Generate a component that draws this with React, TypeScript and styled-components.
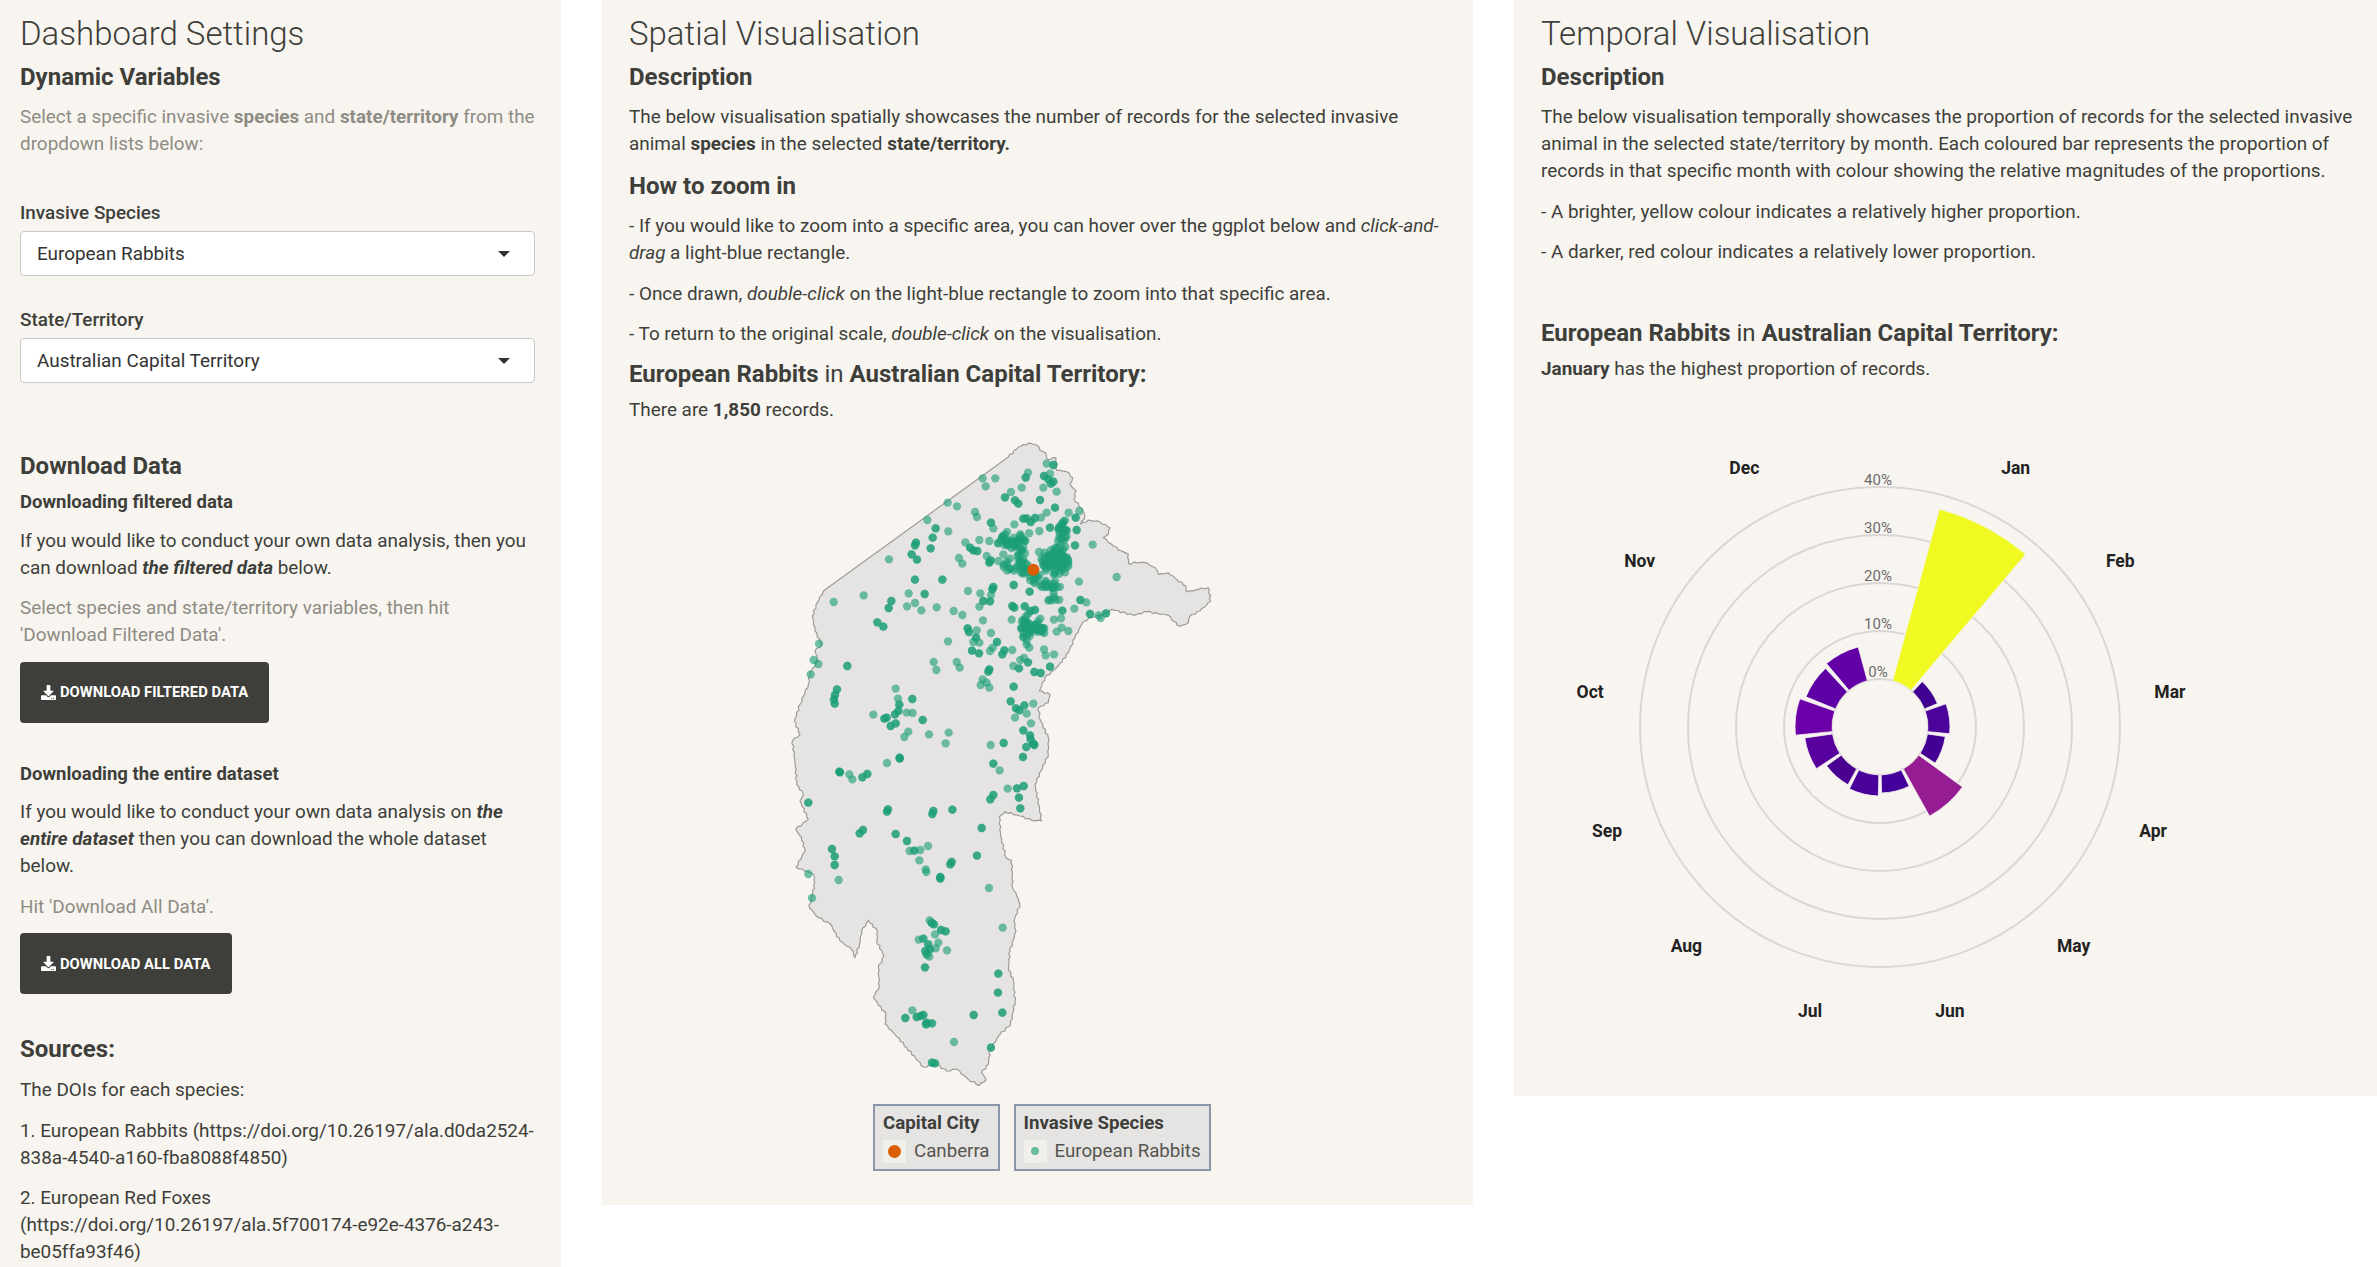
import React from 'react';
import styled, { createGlobalStyle } from 'styled-components';
import { FaDownload } from 'react-icons/fa';

const GlobalStyle = createGlobalStyle`
  html, body {
    margin: 0;
    height: 100%;
    overflow: hidden;
    background: #fff;
  }
  body {
    font-family: Roboto, "Liberation Sans", sans-serif;
    font-size: 18.9px;
    line-height: 27px;
    color: #3e3f3a;
  }
`;

type Pt = [number, number];

// outline of the territory, in 3x units of the map box
const OUTLINE: Pt[] = [
  [775, 78], [805, 67], [830, 72], [840, 88], [858, 97], [862, 115], [888, 110], [890, 148], [920, 152], [938, 170],
  [930, 190], [948, 210], [942, 235], [965, 262], [975, 285], [962, 310], [985, 297], [1020, 303], [1050, 320], [1045, 340],
  [1030, 350], [1060, 375], [1085, 390], [1105, 400], [1105, 428], [1130, 425], [1155, 425], [1185, 440], [1195, 460], [1225, 455],
  [1250, 475], [1278, 495], [1280, 513], [1315, 505], [1345, 500], [1352, 540], [1320, 570], [1290, 585], [1285, 605], [1260, 616],
  [1240, 600], [1225, 583], [1160, 572], [1120, 583], [1055, 565], [1030, 580], [985, 592], [965, 610], [945, 650], [925, 695],
  [895, 735], [855, 770], [838, 810], [870, 820], [865, 845], [835, 860], [840, 895], [865, 950], [865, 1000], [825, 1090],
  [845, 1200], [815, 1198], [780, 1185], [735, 1172], [718, 1188], [722, 1245], [738, 1310], [755, 1318], [758, 1400], [770, 1425],
  [780, 1450], [762, 1500], [768, 1530], [750, 1590], [745, 1640], [760, 1680], [765, 1740], [752, 1810], [720, 1840], [690, 1885],
  [685, 1930], [665, 1955], [678, 1975], [658, 1993], [625, 1975], [590, 1945], [560, 1950], [530, 1930], [490, 1938], [440, 1880],
  [405, 1840], [375, 1810], [378, 1780], [340, 1730], [358, 1695], [355, 1640], [372, 1605], [350, 1560], [352, 1530], [325, 1498],
  [305, 1530], [298, 1570], [285, 1610], [275, 1585], [240, 1560], [210, 1508], [175, 1490], [148, 1460], [165, 1385], [160, 1360],
  [108, 1338], [135, 1290], [125, 1250], [107, 1225], [145, 1195], [120, 1140], [130, 1120], [110, 1090], [105, 1020], [97, 960],
  [120, 940], [103, 900], [120, 850], [145, 790], [150, 755], [175, 720], [165, 690], [185, 670], [165, 630], [157, 585],
  [172, 545], [190, 510], [745, 108],
];

// small wiggle along the border so it reads as a natural boundary
function roughen(points: Pt[]): string {
  const out: string[] = [];
  points.forEach((p, i) => {
    const q = points[(i + 1) % points.length];
    const dx = q[0] - p[0];
    const dy = q[1] - p[1];
    const len = Math.hypot(dx, dy);
    const steps = len > 300 ? 1 : Math.max(1, Math.round(len / 9));
    for (let s = 0; s < steps; s++) {
      const t = s / steps;
      const n = s === 0 ? 0 : Math.sin(i * 7.3 + s * 2.7) * 2.6;
      out.push(`${(p[0] + dx * t - (dy / len) * n).toFixed(1)},${(p[1] + dy * t + (dx / len) * n).toFixed(1)}`);
    }
  });
  return out.join(' ');
}

const LIGHT: Pt[] = [
  [860, 128], [668, 172], [706, 172], [677, 196], [804, 155], [870, 158], [850, 200], [890, 212], [785, 200], [753, 213],
  [563, 245], [591, 256], [645, 273], [651, 288], [502, 297], [565, 331], [763, 310], [926, 275], [958, 270], [860, 275],
  [843, 290], [700, 322], [838, 330], [616, 364], [658, 357], [688, 360], [998, 371], [387, 415], [597, 411], [607, 428],
  [680, 405], [837, 393], [730, 400], [715, 420], [957, 482], [1070, 468], [311, 523], [221, 543], [446, 517], [441, 556],
  [465, 546], [484, 568], [530, 559], [581, 570], [607, 582], [624, 510], [661, 517], [693, 522], [658, 557], [943, 563],
  [979, 544], [1016, 583], [1022, 591], [755, 596], [669, 598], [882, 596], [903, 592], [905, 620], [925, 630], [890, 632],
  [693, 636], [650, 628], [640, 663], [658, 665], [564, 661], [177, 668], [161, 717], [175, 729], [152, 760], [690, 690],
  [698, 680], [757, 687], [800, 670], [808, 680], [852, 685], [857, 703], [882, 700], [521, 723], [590, 723], [529, 747],
  [599, 740], [781, 717], [792, 711], [760, 735], [668, 775], [662, 792], [680, 785], [688, 800], [407, 803], [414, 833],
  [340, 881], [440, 875], [458, 876], [820, 848], [765, 890], [800, 878], [813, 907], [445, 932], [507, 940], [566, 935],
  [433, 948], [557, 967], [692, 972], [381, 1026], [268, 1060], [277, 1075], [719, 1048], [743, 1103], [449, 1290], [481, 1287],
  [504, 1275], [478, 1318], [497, 1345], [499, 1353], [145, 1359], [236, 1377], [156, 1431], [687, 1401], [728, 1520], [509, 1498],
  [525, 1540], [476, 1556], [535, 1565], [527, 1582], [561, 1588], [508, 1607], [457, 1768], [582, 1863],
];

const DARK: Pt[] = [
  [880, 132], [797, 170], [852, 165], [865, 175], [880, 182], [873, 188], [735, 229], [765, 238], [775, 248], [840, 237],
  [885, 260], [693, 305], [800, 292], [790, 293], [825, 291], [812, 303], [527, 322], [518, 350], [468, 365], [465, 373],
  [512, 382], [455, 400], [471, 416], [630, 380], [640, 388], [652, 390], [692, 418], [688, 425], [870, 320], [947, 290],
  [950, 327], [945, 373], [465, 476], [547, 476], [494, 519], [394, 540], [386, 561], [700, 498], [697, 505], [761, 492],
  [809, 512], [670, 540], [690, 541], [757, 555], [763, 560], [794, 556], [825, 567], [812, 570], [907, 569], [961, 537],
  [990, 579], [1038, 577], [352, 604], [370, 617], [623, 622], [627, 633], [648, 650], [711, 663], [636, 689], [657, 697],
  [733, 688], [727, 700], [262, 735], [804, 724], [777, 742], [688, 745], [685, 752], [823, 753], [842, 756], [870, 737],
  [761, 797], [231, 805], [225, 822], [222, 835], [224, 848], [457, 834], [418, 851], [415, 870], [405, 880], [380, 890],
  [373, 893], [407, 907], [392, 915], [488, 897], [752, 841], [768, 862], [778, 868], [793, 853], [790, 928], [810, 943],
  [812, 955], [731, 966], [799, 978], [820, 968], [823, 972], [789, 1008], [700, 1028], [419, 1010], [419, 1013], [238, 1052],
  [240, 1054], [307, 1069], [322, 1059], [145, 1145], [771, 1102], [791, 1095], [777, 1130], [700, 1122], [691, 1135], [781, 1162],
  [384, 1165], [381, 1172], [520, 1170], [517, 1179], [577, 1166], [665, 1221], [309, 1227], [299, 1237], [407, 1239], [441, 1260],
  [216, 1284], [224, 1306], [224, 1332], [463, 1289], [651, 1304], [575, 1323], [571, 1330], [541, 1368], [541, 1373], [515, 1506],
  [522, 1510], [543, 1527], [557, 1531], [490, 1553], [505, 1570], [496, 1590], [510, 1585], [500, 1600], [495, 1639], [715, 1658],
  [714, 1715], [727, 1775], [641, 1782], [436, 1791], [470, 1788], [490, 1782], [482, 1785], [500, 1805], [498, 1810], [516, 1807],
  [693, 1880], [516, 1925], [525, 1927],
];

// runs of records packed so tightly they merge into thick bands
const BANDS: Pt[][] = [
  [[715, 355], [740, 360], [770, 368], [785, 400], [790, 430], [800, 455], [825, 470], [850, 490], [880, 500], [895, 485]],
  [[868, 525], [878, 530], [892, 540]],
  [[905, 305], [910, 340], [900, 370]],
  [[898, 310], [918, 325]],
  [[905, 385], [915, 410], [915, 440], [895, 450], [860, 440], [855, 410], [880, 390], [900, 395]],
  [[870, 400], [895, 425], [870, 430], [890, 405]],
  [[730, 340], [745, 375], [775, 355], [805, 345]],
  [[785, 610], [820, 620], [855, 628]],
  [[795, 585], [800, 625], [800, 660]],
  [[830, 600], [845, 640]],
  [[740, 420], [742, 450]],
  [[770, 430], [775, 450]],
];

function trail(points: Pt[]): Pt[] {
  const out: Pt[] = [];
  for (let i = 0; i < points.length - 1; i++) {
    const [a, b] = [points[i], points[i + 1]];
    const n = Math.max(1, Math.round(Math.hypot(b[0] - a[0], b[1] - a[1]) / 4));
    for (let s = 0; s < n; s++) {
      // scatter across the band so it comes out as wide as the original clusters
      const jx = Math.sin(s * 2.1 + i) * 11;
      const jy = Math.cos(s * 3.3 + i) * 11;
      out.push([a[0] + ((b[0] - a[0]) * s) / n + jx, a[1] + ((b[1] - a[1]) * s) / n + jy]);
    }
  }
  return out;
}

const RECORDS: Pt[] = [...LIGHT, ...DARK, ...DARK, ...BANDS.flatMap(trail)];

const STEP = 360 / 13;
const MONTHS = [
  { name: 'Jan', r: 226, fill: '#f0f921' },
  { name: 'Feb', r: 62, fill: '#3f0090' },
  { name: 'Mar', r: 70, fill: '#4b039a' },
  { name: 'Apr', r: 66, fill: '#430092' },
  { name: 'May', r: 102, fill: '#951c92' },
  { name: 'Jun', r: 66, fill: '#43009a' },
  { name: 'Jul', r: 69, fill: '#4a009b' },
  { name: 'Aug', r: 66, fill: '#4a0090' },
  { name: 'Sep', r: 76, fill: '#57009e' },
  { name: 'Oct', r: 85, fill: '#6c00a8' },
  { name: 'Nov', r: 80, fill: '#5d01a4' },
  { name: 'Dec', r: 83, fill: '#6200a6' },
];
const RINGS = [48, 96, 144, 192, 240];
const TICKS = [
  { label: '0%', y: -55 },
  { label: '10%', y: -103 },
  { label: '20%', y: -151 },
  { label: '30%', y: -199 },
  { label: '40%', y: -247 },
];

function polar(r: number, deg: number): string {
  const a = (deg * Math.PI) / 180;
  return `${(r * Math.sin(a)).toFixed(2)} ${(-r * Math.cos(a)).toFixed(2)}`;
}

function sector(r: number, centre: number): string {
  const half = STEP * 0.45;
  const from = centre - half;
  const to = centre + half;
  return `M${polar(48, from)} L${polar(r, from)} A${r} ${r} 0 0 1 ${polar(r, to)} L${polar(48, to)} A48 48 0 0 0 ${polar(48, from)}Z`;
}

function App() {
  return (
    <>
      <GlobalStyle />
      <Page>
        <Sidebar>
          <PanelTitle>Dashboard Settings</PanelTitle>
          <Heading>Dynamic Variables</Heading>
          <Muted>
            Select a specific invasive <b>species</b> and <b>state/territory</b> from the dropdown lists below:
          </Muted>
          <FieldLabel $top={42}>Invasive Species</FieldLabel>
          <Select>
            European Rabbits
            <Caret />
          </Select>
          <FieldLabel $top={30}>State/Territory</FieldLabel>
          <Select>
            Australian Capital Territory
            <Caret />
          </Select>
          <Heading $top={70}>Download Data</Heading>
          <SubHeading>Downloading filtered data</SubHeading>
          <Para>
            If you would like to conduct your own data analysis, then you can download{' '}
            <b>
              <i>the filtered data</i>
            </b>{' '}
            below.
          </Para>
          <Muted>Select species and state/territory variables, then hit 'Download Filtered Data'.</Muted>
          <DownloadButton>
            <FaDownload size={15} />
            Download Filtered Data
          </DownloadButton>
          <SubHeading $top={41}>Downloading the entire dataset</SubHeading>
          <Para>
            If you would like to conduct your own data analysis on{' '}
            <b>
              <i>the entire dataset</i>
            </b>{' '}
            then you can download the whole dataset below.
          </Para>
          <Muted>Hit 'Download All Data'.</Muted>
          <DownloadButton>
            <FaDownload size={15} />
            Download All Data
          </DownloadButton>
          <Heading $top={42} $bottom={14}>
            Sources:
          </Heading>
          <Para>The DOIs for each species:</Para>
          <Para>1. European Rabbits (https://doi.org/10.26197/ala.d0da2524-838a-4540-a160-fba8088f4850)</Para>
          <Para>2. European Red Foxes (https://doi.org/10.26197/ala.5f700174-e92e-4376-a243-be05ffa93f46)</Para>
        </Sidebar>

        <SpatialPanel>
          <PanelTitle>Spatial Visualisation</PanelTitle>
          <Heading>Description</Heading>
          <Para>
            The below visualisation spatially showcases the number of records for the selected invasive animal{' '}
            <b>species</b> in the selected <b>state/territory.</b>
          </Para>
          <Heading $top={16}>How to zoom in</Heading>
          <Para>
            - If you would like to zoom into a specific area, you can hover over the ggplot below and{' '}
            <i>click-and-drag</i> a light-blue rectangle.
          </Para>
          <Para>
            - Once drawn, <i>double-click</i> on the light-blue rectangle to zoom into that specific area.
          </Para>
          <Para>
            - To return to the original scale, <i>double-click</i> on the visualisation.
          </Para>
          <Heading $bottom={9.5}>
            <b>European Rabbits</b> <Thin>in</Thin> <b>Australian Capital Territory:</b>
          </Heading>
          <Para>
            There are <b>1,850</b> records.
          </Para>
          <MapPlot viewBox="0 0 1440 2010" aria-label="Map of records">
            <polygon points={roughen(OUTLINE)} fill="#e5e4e3" stroke="#9b9a98" strokeWidth={3.5} strokeLinejoin="round" />
            {RECORDS.map(([x, y], i) => (
              <circle key={i} cx={x} cy={y} r={12.5} fill="#1b9e77" fillOpacity={0.62} />
            ))}
            <circle cx={820} cy={446} r={18} fill="#d95f02" />
          </MapPlot>
          <Legends>
            <LegendBox>
              <LegendTitle>Capital City</LegendTitle>
              <LegendRow>
                <LegendKey>
                  <LegendDot $size={13} $colour="#d95f02" />
                </LegendKey>
                Canberra
              </LegendRow>
            </LegendBox>
            <LegendBox>
              <LegendTitle>Invasive Species</LegendTitle>
              <LegendRow>
                <LegendKey>
                  <LegendDot $size={8} $colour="#66bd9f" />
                </LegendKey>
                European Rabbits
              </LegendRow>
            </LegendBox>
          </Legends>
        </SpatialPanel>

        <TemporalPanel>
          <PanelTitle>Temporal Visualisation</PanelTitle>
          <Heading>Description</Heading>
          <Para>
            The below visualisation temporally showcases the proportion of records for the selected invasive animal in
            the selected state/territory by month. Each coloured bar represents the proportion of records in that
            specific month with colour showing the relative magnitudes of the proportions.
          </Para>
          <Para>- A brighter, yellow colour indicates a relatively higher proportion.</Para>
          <Para>- A darker, red colour indicates a relatively lower proportion.</Para>
          <Heading $top={55} $bottom={8.5}>
            <b>European Rabbits</b> <Thin>in</Thin> <b>Australian Capital Territory:</b>
          </Heading>
          <Para>
            <b>January</b> has the highest proportion of records.
          </Para>
          <RosePlot viewBox="-320 -307 640 630" aria-label="Records by month">
            {RINGS.map((r) => (
              <circle key={r} r={r} fill="none" stroke="#d9d8d6" strokeWidth={2} />
            ))}
            {MONTHS.map((m, i) => (
              <path key={m.name} d={sector(m.r, (i + 1) * STEP)} fill={m.fill} stroke="#f8f5f0" strokeWidth={0.8} />
            ))}
            {TICKS.map((t) => (
              <TickLabel key={t.label} x={-2} y={t.y}>
                {t.label}
              </TickLabel>
            ))}
            {MONTHS.map((m, i) => {
              const a = ((i + 1) * STEP * Math.PI) / 180;
              return (
                <MonthLabel key={m.name} x={292 * Math.sin(a)} y={-292 * Math.cos(a)}>
                  {m.name}
                </MonthLabel>
              );
            })}
          </RosePlot>
        </TemporalPanel>
      </Page>
    </>
  );
}

const Page = styled.div`
  display: grid;
  grid-template-columns: 561px 871px 863px;
  column-gap: 41px;
  align-items: start;
  height: 100vh;
  overflow: hidden;
`;

const Panel = styled.section`
  background: #f8f5f0;
  padding: 16px 27px 0;
  box-sizing: border-box;
`;

const Sidebar = styled(Panel)`
  padding: 16px 26px 0 20px;
  height: 1267px;
  overflow: hidden;
`;

const SpatialPanel = styled(Panel)`
  height: 1205px;
`;

const TemporalPanel = styled(Panel)`
  height: 1096px;
  padding-right: 22px;
`;

const PanelTitle = styled.h3`
  margin: 0 0 13px;
  font-size: 33px;
  line-height: 35px;
  font-weight: 300;
`;

const Heading = styled.h4<{ $top?: number; $bottom?: number }>`
  margin: ${(p) => p.$top ?? 0}px 0 ${(p) => p.$bottom ?? 13}px;
  font-size: 24px;
  line-height: 26px;
  font-weight: 700;

  b {
    font-weight: 700;
  }
`;

const Thin = styled.span`
  font-weight: 400;
`;

const SubHeading = styled.h5<{ $top?: number }>`
  margin: ${(p) => p.$top ?? 0}px 0 14.5px;
  font-size: 18.5px;
  line-height: 20px;
  font-weight: 700;
`;

const Para = styled.p`
  margin: 0 0 13.5px;

  b {
    font-weight: 700;
  }
`;

const Muted = styled(Para)`
  color: #8e8c84;
`;

const FieldLabel = styled.div<{ $top: number }>`
  margin: ${(p) => p.$top}px 0 5px;
  font-weight: 500;
`;

const Select = styled.div`
  display: flex;
  align-items: center;
  justify-content: space-between;
  box-sizing: border-box;
  height: 45px;
  padding: 0 24px 0 16px;
  background: #fff;
  border: 1px solid #c9c9c9;
  border-radius: 4px;
  color: #333;
`;

const Caret = styled.span`
  width: 0;
  height: 0;
  border-left: 6px solid transparent;
  border-right: 6px solid transparent;
  border-top: 6px solid #333;
`;

const DownloadButton = styled.button`
  display: flex;
  align-items: center;
  gap: 4px;
  height: 61px;
  margin-top: 13px;
  padding: 0 21px;
  background: #3e3f3a;
  border: 0;
  border-radius: 4px;
  color: #fff;
  font-family: inherit;
  font-size: 14.8px;
  font-weight: 700;
  text-transform: uppercase;
`;

const MapPlot = styled.svg`
  display: block;
  width: 480px;
  height: 670px;
  margin: -16px 0 0 131px;
`;

const Legends = styled.div`
  display: flex;
  gap: 14px;
  margin: 13px 0 0 244px;
`;

const LegendBox = styled.div`
  box-sizing: border-box;
  height: 67px;
  padding: 6px 8px;
  background: #e5e4e3;
  border: 2px solid #8a97a8;
  font-size: 18.7px;
  line-height: 22px;
`;

const LegendTitle = styled.div`
  font-weight: 700;
  margin-bottom: 6px;
`;

const LegendRow = styled.div`
  display: flex;
  align-items: center;
  gap: 8px;
  color: #55554f;
  white-space: nowrap;
`;

const LegendKey = styled.span`
  display: flex;
  align-items: center;
  justify-content: center;
  width: 23px;
  height: 23px;
  background: #f0efea;
`;

const LegendDot = styled.span<{ $size: number; $colour: string }>`
  width: ${(p) => p.$size}px;
  height: ${(p) => p.$size}px;
  border-radius: 50%;
  background: ${(p) => p.$colour};
`;

const RosePlot = styled.svg`
  display: block;
  width: 640px;
  height: 630px;
  margin: 38px 0 0 19px;
`;

const TickLabel = styled.text`
  font-size: 15px;
  fill: #6b6b6b;
  text-anchor: middle;
  dominant-baseline: central;
`;

const MonthLabel = styled.text`
  font-size: 17.5px;
  font-weight: 700;
  fill: #222;
  text-anchor: middle;
  dominant-baseline: central;
`;

export default App;
